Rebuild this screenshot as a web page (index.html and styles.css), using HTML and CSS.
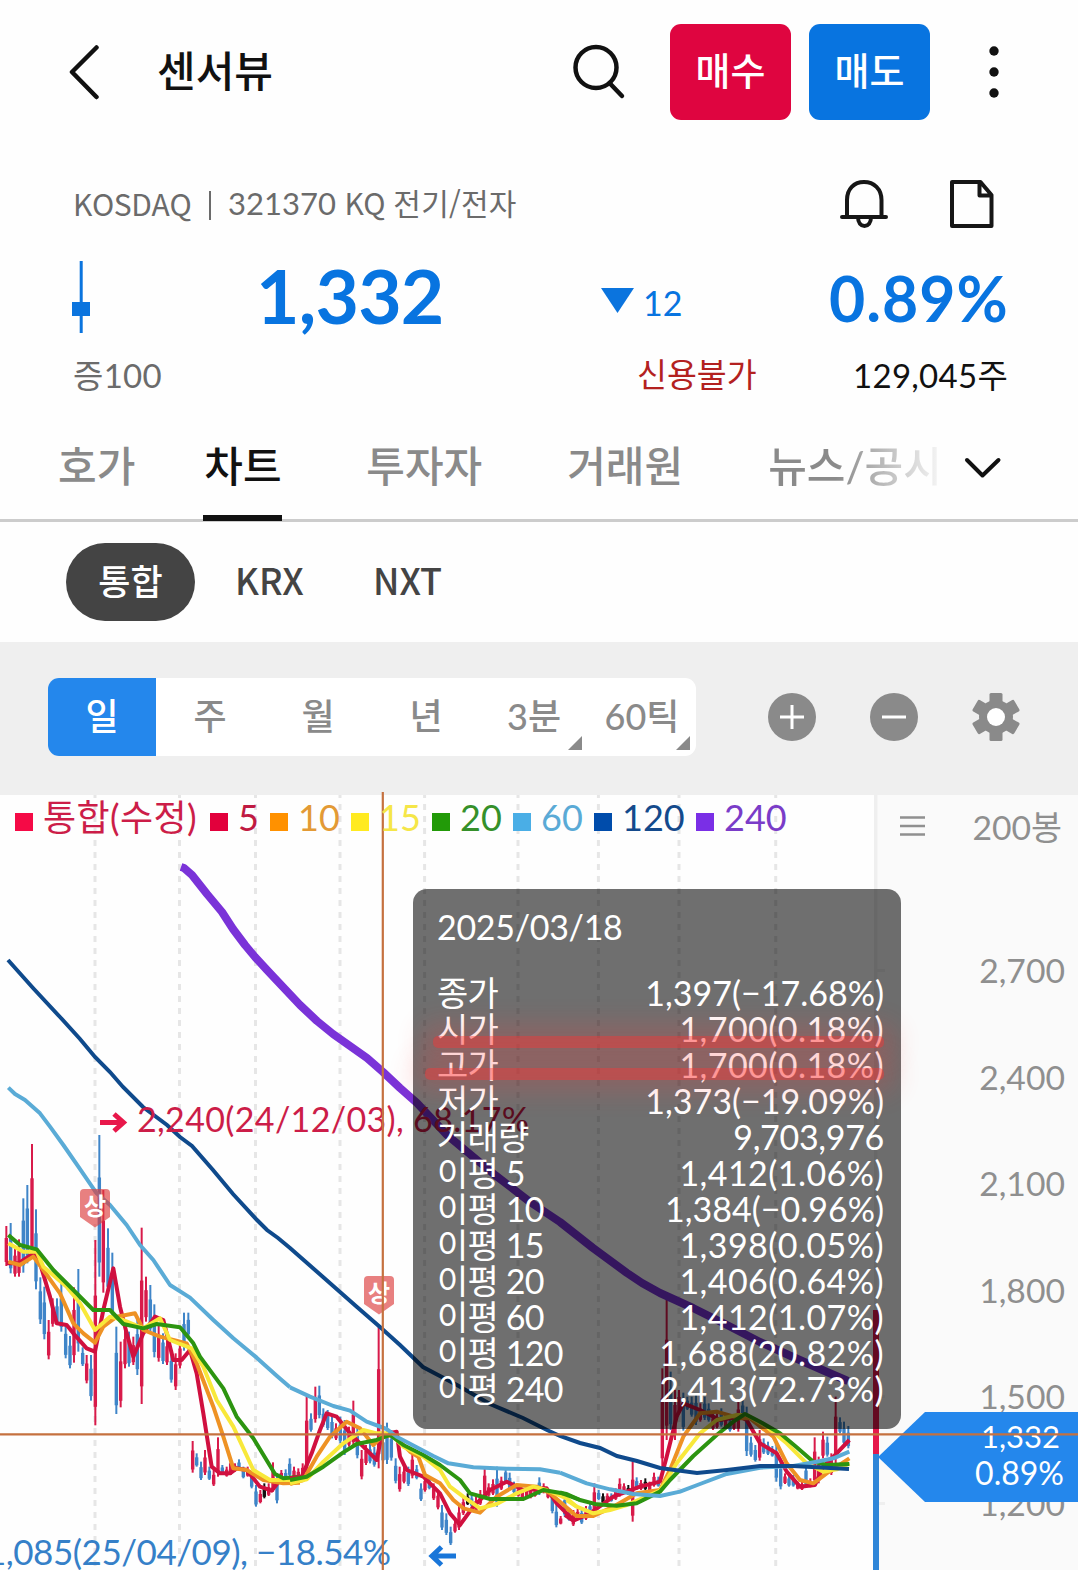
FILE: index.html
```html
<!DOCTYPE html>
<html lang="ko">
<head>
<meta charset="utf-8">
<title>센서뷰</title>
<link rel="stylesheet" href="styles.css">
</head>
<body>
<header class="topbar">
  <svg class="icon-back" width="34" height="56" viewBox="0 0 34 56"><path d="M29.500 3.500 5 28l24.500 25"/></svg>
  <h1 class="title">센서뷰</h1>
  <svg class="icon-search" width="56" height="56" viewBox="0 0 56 56"><circle cx="25" cy="23.500" r="20.500"/><path d="M38.500 39 51 52"/></svg>
  <button class="trade buy">매수</button>
  <button class="trade sell">매도</button>
  <svg class="icon-more" width="12" height="56" viewBox="0 0 12 56"><circle cx="6" cy="7" r="4.700"/><circle cx="6" cy="28" r="4.700"/><circle cx="6" cy="49" r="4.700"/></svg>
</header>

<section class="meta">
  <span class="market">KOSDAQ</span><i class="sep"></i><span class="code"><span class="num">321370</span> <span class="kq">KQ</span> 전기/전자</span>
  <svg class="icon-bell" width="50" height="50" viewBox="0 0 50 50"><path d="M3 38H47M8 38V21C8 10 15 3 25 3S42.500 10 42.500 21V38M19 38c0 6 3 9 6.500 9s6.500-3 6.500-9"/></svg>
  <svg class="icon-doc" width="46" height="50" viewBox="0 0 46 50"><path d="M3 3H31.500L42.500 16V47H3ZM30.500 3V16.500H42.500"/></svg>
</section>

<section class="quote">
  <svg class="mini-candle" width="18" height="72" viewBox="0 0 18 72"><path d="M7.700 0h3V72h-3ZM0 41h18v14H0Z"/></svg>
  <strong class="price">1,332</strong>
  <svg class="down" width="33" height="25" viewBox="0 0 33 25"><path d="M0 0H33L16.500 25Z"/></svg>
  <span class="diff">12</span>
  <strong class="rate">0.89%</strong>
</section>

<section class="sub">
  <span class="margin">증100</span>
  <span class="credit">신용불가</span>
  <span class="volume">129,045주</span>
</section>

<nav class="tabs">
  <a class="tab">호가</a>
  <a class="tab active">차트</a>
  <a class="tab">투자자</a>
  <a class="tab">거래원</a>
  <a class="tab fade">뉴스/공시</a>
  <svg class="icon-down" width="38" height="22" viewBox="0 0 38 22"><path d="M3 3 18.500 18.500 34.500 3"/></svg>
</nav>

<nav class="exchanges">
  <a class="pill on">통합</a><a class="pill krx">KRX</a><a class="pill nxt">NXT</a>
</nav>

<section class="toolbar">
  <div class="periods">
    <a class="period on">일</a><a class="period">주</a><a class="period">월</a><a class="period">년</a><a class="period more">3분</a><a class="period more">60틱</a>
  </div>
  <svg class="tool plus" width="48" height="48" viewBox="0 0 48 48"><circle cx="24" cy="24" r="24"/><path d="M12 24H36M24 12V36"/></svg>
  <svg class="tool minus" width="48" height="48" viewBox="0 0 48 48"><circle cx="24" cy="24" r="24"/><path d="M12 24H36"/></svg>
  <svg class="tool gear" width="48" height="48" viewBox="-24 -24 48 48">
    <g><circle r="17"/>
    <rect x="-6.500" y="-24" width="13" height="48" rx="1.500"/>
    <rect x="-6.500" y="-24" width="13" height="48" rx="1.500" transform="rotate(60)"/>
    <rect x="-6.500" y="-24" width="13" height="48" rx="1.500" transform="rotate(120)"/></g>
    <circle class="hole" r="9"/>
  </svg>
</section>

<main class="chart">
  <svg class="plot" width="1078" height="778" viewBox="0 792 1078 778">
    <rect class="axis-bg" x="877" y="795" width="201" height="775"/>
    <rect class="axis-line" x="874" y="795" width="3.500" height="775"/>
    <path class="axis-line" d="M877 969h8v3h-8zM877 1288h8v3h-8zM877 1395h8v3h-8zM877 1502h8v3h-8z"/>
    <path class="grid" d="M95 795V1570M179.500 795V1570M255.500 795V1570M340 795V1570M424.600 795V1570M518 795V1570M598.400 795V1570M679 795V1570M775.700 795V1570"/>
    <g id="candles"></g>
    <g class="ma" transform="translate(0 1120) scale(.33333)">
      <polyline class="m5" points="20,430 55,430 100,400 120,430 150,530 170,610 200,615 220,640 260,685 285,695 310,570 340,445 360,560 380,640 400,710 430,640 465,590 490,600 520,720 545,720 570,690 590,760 610,880 635,1040 660,1060 690,1060 710,1045 740,1050 780,1100 815,1112 840,1080 900,1070"/>
      <polyline class="m10" points="25,425 60,435 100,410 130,450 180,520 220,610 250,640 285,668 310,620 350,590 405,580 430,630 480,650 520,660 560,670 590,730 640,860 670,950 700,1045 740,1050 790,1080 850,1090 900,1088"/>
      <polyline class="m15" points="25,370 70,395 110,395 130,440 200,500 240,550 285,630 330,590 370,600 430,625 480,595 510,660 540,672 575,685 610,740 650,840 700,920 760,1050 810,1080 850,1080 900,1080"/>
      <polyline class="m20" points="25,345 60,375 110,388 160,450 220,510 280,570 330,570 370,612 430,625 470,612 540,622 580,670 600,710 670,805 710,890 760,955 825,1062 850,1075 900,1070"/>
      <polyline class="m60" points="25,-97 45,-78 75,-60 120,-20 150,20 190,75 235,140 290,220 330,255 380,315 420,375 460,420 510,495 570,533 640,600 700,655 770,713 830,767 870,802"/>
    </g>
    <g class="ma" transform="translate(290 1200) scale(.33333)">
      <polyline class="m5" points="0,835 35,830 65,760 90,690 110,640 140,650 180,700 220,740 260,780 275,705 320,695 330,770 350,810 400,830 450,880 480,940 510,975 550,920 600,870 650,845 700,870 770,865 800,910 850,960"/>
      <polyline class="m10" points="0,852 40,840 80,770 120,710 170,665 210,685 250,735 275,710 310,705 360,755 385,770 405,825 450,850 490,900 520,925 570,938 620,890 680,855 740,860 780,880 850,940"/>
      <polyline class="m15" points="0,850 50,838 100,785 160,730 220,690 260,700 300,700 340,740 400,770 450,810 480,860 520,890 570,925 620,912 680,880 730,860 770,870 830,895 860,920"/>
      <polyline class="m20" points="0,840 50,830 100,800 160,757 200,732 260,720 300,705 340,735 400,765 450,795 510,840 540,880 600,897 700,897 760,870 830,882 870,900"/>
      <polyline class="m60" points="0,562 60,590 130,618 180,632 230,665 290,687 320,710 380,742 430,768 475,790 550,802 650,806 750,808 810,818"/>
    </g>
    <g class="ma" transform="translate(560 1200) scale(.33333)">
      <polyline class="m5" points="15,945 40,962 90,940 160,890 240,860 300,845 320,770 350,650 370,610 420,630 480,660 540,650 560,660 600,730 650,760 680,815 720,860 765,855 790,800 830,760 868,720"/>
      <polyline class="m10" points="20,925 50,948 100,948 160,920 230,880 300,870 330,810 370,710 420,640 470,635 540,655 570,655 640,710 680,790 720,840 760,850 800,820 868,775"/>
      <polyline class="m15" points="20,900 50,920 100,940 150,930 200,915 300,872 350,790 420,700 470,660 530,645 560,645 620,680 680,730 740,790 790,815 830,808 868,790"/>
      <polyline class="m20" points="0,877 60,900 110,913 170,917 230,910 300,875 330,840 400,768 470,705 520,665 555,642 600,665 660,700 710,742 760,785 800,795 868,792"/>
      <polyline class="m60" points="0,818 80,850 150,868 220,882 300,888 360,875 420,852 500,822 600,803 700,798 770,785 820,775 868,755"/>
    </g>
    <polyline class="m120" points="8,960 33,988 60,1017 80,1039 95,1057 110,1072 123,1087 143,1107 167,1125 180,1137 192,1146 213,1170 233,1194 257,1220 267,1230 278,1238 290,1248 323,1277 357,1307 380,1327 400,1345 423,1367 457,1385 490,1404 523,1418 547,1430 560,1436 580,1443 600,1448 617,1456 637,1461 660,1468 697,1473 727,1470 760,1466 793,1466 849,1469"/>
    <polyline class="m240" points="181,867 184,868 192,875 207,894 222,912 233,929 245,945 255,957 267,970 283,987 300,1005 317,1021 333,1034 350,1046 367,1058 383,1072 400,1088 417,1103 447,1135 495,1175 530,1202 560,1222 593,1248 627,1273 642,1283 660,1293 693,1308 727,1325 760,1342 793,1357 827,1372 848,1381"/>
    <rect class="up" x="873" y="1310" width="6" height="144"/>
    <rect class="dn" x="873" y="1454" width="6" height="116"/>
    <g class="high">
      <path d="M100 1122.500H123M114 1114 123.500 1122.500 114 1131"/>
      <text x="137" y="1132" textLength="392">2,240(24/12/03), 68.17%</text>
    </g>
    <g class="low">
      <path d="M456 1556H433M441.500 1547 432 1556l9.500 9"/>
      <text x="-14" y="1565" textLength="405">1,085(25/04/09), −18.54%</text>
    </g>
    <g class="badge"><path d="M84 1189h22q4 0 4 4v24l-15 10.500L80 1217v-24q0-4 4-4z"/><text x="95" y="1215">상</text></g>
    <g class="badge"><path d="M368 1276h22q4 0 4 4v24l-15 10.500L364 1304v-24q0-4 4-4z"/><text x="379" y="1302">상</text></g>
    <g class="scale">
      <text x="1065" y="983">2,700</text><text x="1065" y="1089.500">2,400</text><text x="1065" y="1196">2,100</text>
      <text x="1065" y="1302.500">1,800</text><text x="1065" y="1408.500">1,500</text><text x="1065" y="1516">1,200</text>
      <text x="1062" y="840">200봉</text>
      <path d="M900 817.500H925M900 826H925M900 834.500H925"/>
    </g>
    <g class="tag">
      <path d="M878 1457 925 1412H1078V1502H925Z"/>
      <text x="1060" y="1448">1,332</text><text x="1064" y="1484.500">0.89%</text>
    </g>
    <path class="cross" d="M382.800 792V1570M0 1434.300H1078"/>
  </svg>

  <ul class="legend">
    <li class="c0"><b></b>통합(수정)</li><li class="c5"><b></b>5</li><li class="c10"><b></b>10</li><li class="c15"><b></b>15</li><li class="c20"><b></b>20</li><li class="c60"><b></b>60</li><li class="c120"><b></b>120</li><li class="c240"><b></b>240</li>
  </ul>

  <div class="tooltip">
    <p class="date">2025/03/18</p>
    <dl class="values">
      <dt>종가</dt><dd class="neg">1,397(−17.68%)</dd>
      <dt>시가</dt><dd>1,700(0.18%)</dd>
      <dt>고가</dt><dd>1,700(0.18%)</dd>
      <dt>저가</dt><dd class="neg">1,373(−19.09%)</dd>
      <dt>거래량</dt><dd class="vol">9,703,976</dd>
      <dt>이평 5</dt><dd>1,412(1.06%)</dd>
      <dt>이평 10</dt><dd class="neg">1,384(−0.96%)</dd>
      <dt>이평 15</dt><dd>1,398(0.05%)</dd>
      <dt>이평 20</dt><dd>1,406(0.64%)</dd>
      <dt>이평 60</dt><dd>1,412(1.07%)</dd>
      <dt>이평 120</dt><dd>1,688(20.82%)</dd>
      <dt>이평 240</dt><dd>2,413(72.73%)</dd>
    </dl>
    <i class="marker first"></i><i class="marker second"></i>
  </div>
</main>
<script src="chart.js"></script>
</body>
</html>
```
FILE: styles.css
```css
* { box-sizing: border-box; margin: 0; padding: 0; }
body {
  width: 1078px; height: 1570px; overflow: hidden; background: #fefefe; color: #111;
  font-family: Lato, "Noto Sans CJK KR", sans-serif; line-height: 1;
  font-kerning: none;
}
svg { display: block; flex: none; fill: none; }
h1, strong, span, a { white-space: nowrap; }

.topbar { display: flex; align-items: center; height: 144px; padding-left: 67px; }
.icon-back, .icon-search { stroke: #111; stroke-width: 4.500; stroke-linecap: round; stroke-linejoin: round; }
.title { width: 415px; margin-left: 56px; padding-bottom: 3px; font-size: 42px; font-weight: 500; }
.icon-search { margin-left: -1px; }
.trade { width: 121px; height: 96px; padding-bottom: 3px; border: 0; border-radius: 11px; color: #fff; font: 500 38px/93px Lato, "Noto Sans CJK KR", sans-serif; }
.buy { margin-left: 43px; background: #df0540; }
.sell { margin-left: 18px; background: #0874e0; }
.icon-more { margin-left: 58px; fill: #111; }

.meta { display: flex; align-items: center; height: 108px; margin-top: 6px; padding-left: 73px; margin-bottom: -6px; color: #6b6b6b; font-family: "Noto Sans CJK KR", sans-serif; font-size: 30px; }
.market { width: 118px; padding-bottom: 2px; letter-spacing: -.4px; }
.sep { width: 2px; height: 29px; margin: 2px 17px 0 18px; background: #6b6b6b; }
.code { width: 611px; padding-bottom: 2px; letter-spacing: .2px; }
.num { font-family: Lato, sans-serif; font-size: 31px; letter-spacing: 0; }
.kq { letter-spacing: -.7px; }
.meta svg { stroke: #161616; stroke-width: 4; stroke-linejoin: round; stroke-linecap: round; }
.icon-doc { margin-left: 60px; }

.quote { display: flex; align-items: center; height: 88px; padding-left: 72px; color: #0874e0; }
.mini-candle, .down { fill: #0b74de; }
.mini-candle { margin-top: 2px; }
.price { width: 344px; margin-left: 166px; padding-bottom: 2px; font-size: 75px; font-weight: 700; letter-spacing: -.8px; }
.down { margin: 9px 0 0 1px; }
.diff { width: 186px; margin: 14px 0 0 9px; font-size: 34px; }
.rate { margin-top: 4px; font-size: 62.500px; font-weight: 700; letter-spacing: 1px; }

.sub { display: flex; align-items: center; height: 70px; padding-left: 73px; font-size: 33px; color: #111; }
.margin { width: 564px; color: #6b6b6b; letter-spacing: .3px; }
.credit { width: 216px; padding-top: 1px; color: #b3211f; font-size: 32.500px; }
.volume { letter-spacing: .3px; }

.tabs { display: flex; align-items: center; height: 112px; padding-left: 58px; border-bottom: 3px solid #ccc; color: #8a8a8a; font-size: 42px; font-weight: 500; }
.tab { height: 112px; line-height: 115px; }
.tab.active { width: 79px; margin: 0 84px 0 68px; padding-left: 1px; color: #111; border-bottom: 6px solid #111; }
.tab + .tab:not(.active) { margin-right: 85px; }
.tab.fade { width: 178px; background: linear-gradient(90deg, #8a8a8a 38%, #f4f4f4 96%); background-clip: text; color: transparent; }
.tabs .tab.fade { margin-right: 18px; }
.icon-down { margin-top: 6px; stroke: #111; stroke-width: 4; stroke-linecap: round; stroke-linejoin: round; }

.exchanges { display: flex; align-items: center; height: 120px; padding-left: 66px; color: #444; font: 500 35px/78px "Noto Sans CJK KR", sans-serif; }
.pill.on { width: 129px; height: 78px; border-radius: 39px; text-align: center; background: #444; color: #fff; line-height: 73px; }
.krx, .nxt { font-size: 36px; padding-bottom: 6px; }
.krx { margin-left: 40px; width: 138px; }

.toolbar { display: flex; align-items: center; height: 153px; padding: 0 0 3px 48px; background: #efefef; }
.periods { display: grid; grid-template-columns: repeat(6, 108px); height: 78px; border-radius: 11px; overflow: hidden; background: #fff; }
.period { position: relative; text-align: center; font-size: 36px; font-weight: 500; line-height: 76px; color: #8a8a8a; }
.period.on { background: #2487ec; color: #fff; }
.more::after { content: ""; position: absolute; right: 6px; bottom: 6px; border-left: 14px solid transparent; border-bottom: 14px solid #8a8a8a; }
.tool { fill: #8a8a8a; }
.tool path { stroke: #fff; stroke-width: 3; }
.plus { margin-left: 72px; }
.minus { margin-left: 54px; }
.gear { margin-left: 54px; }
.hole { fill: #fff; }

.chart { position: relative; height: 775px; }
.plot { margin-top: -3px; position: absolute; top: 0; left: 0; }
.axis-bg { fill: #fafafa; }
.axis-line { fill: #efefef; }
.grid { stroke: #e6e6e6; stroke-width: 3; stroke-dasharray: 6 6; stroke-dashoffset: 3; }
.ma polyline { stroke-width: 12; stroke-linejoin: round; }
.ma .m5 { stroke: #d0103f; } .ma .m10 { stroke: #ee9224; } .ma .m15 { stroke: #f8e83a; }
.ma .m20 { stroke: #2c9410; } .ma .m60 { stroke: #5aabd6; }
.m120 { stroke: #0f4a8c; stroke-width: 4; }
.m240 { stroke: #7a33d8; stroke-width: 8; stroke-linejoin: round; }
.up { fill: #e6194b; } .dn { fill: #2f86d8; }
.plot text { font-size: 34px; }
.high text { fill: #cc1d48; } .high path { stroke: #e8174a; stroke-width: 5; }
.plot .low text { fill: #3580c8; font-size: 35px; } .low path { stroke: #1976d9; stroke-width: 5; }
.badge path { fill: #db3c3c; fill-opacity: .65; }
.plot .badge text { fill: #fff; font-size: 24px; font-weight: 700; text-anchor: middle; }
.plot .scale text { fill: #8f8f8f; text-anchor: end; font-size: 33.700px; }
.scale path { stroke: #909090; stroke-width: 2.500; }
.tag path { fill: #2487ec; }
.plot .tag text { fill: #fff; text-anchor: end; font-size: 32px; }
.plot .tag text:nth-of-type(1) { font-size: 31px; }
.cross { stroke: #c5713f; stroke-width: 2.200; }

.legend { position: absolute; top: 0; left: 15px; display: flex; list-style: none; font-size: 36px; line-height: 44px; }
.legend li { display: flex; white-space: nowrap; }
.legend b { width: 18px; height: 18px; margin: 18px 10px 0 0; background: currentColor; }
.c0 { width: 195px; color: #cc1d48; letter-spacing: .4px; } .c5 { width: 60px; color: #c01a42; }
.c10 { width: 81px; color: #e39a35; } .c15 { width: 81px; color: #f5e648; }
.c20 { width: 81px; color: #35902a; } .c60 { width: 81px; color: #5aaad6; }
.c120 { width: 102px; color: #144a8c; } .c240 { color: #7a3cc8; }
.c0 b { background: #f50a46; } .c5 b { background: #e2003c; } .c10 b { background: #ff9100; } .c15 b { background: #ffea20; }
.c20 b { background: #229a08; } .c60 b { background: #4aaee6; } .c120 b { background: #004cab; } .c240 b { background: #7a2fe6; }

.tooltip { position: absolute; left: 413px; top: 94px; width: 488px; height: 540px; padding: 20px 17px 0 24px; border-radius: 14px; background: rgba(0, 0, 0, .565); color: #fff; font-size: 34px; line-height: 36px; }
.date { margin-bottom: 30px; letter-spacing: -.3px; }
.values { display: grid; grid-template-columns: 1fr auto; }
.values dt, .values dd { height: 36px; white-space: nowrap; }
.values dt { letter-spacing: -.8px; }
.values dd { text-align: right; letter-spacing: .45px; }
.values .neg { letter-spacing: 0; }
.values .vol { letter-spacing: -.3px; }
.marker { position: absolute; height: 12px; border-radius: 5px; background: rgba(255, 52, 52, .5); box-shadow: 0 0 26px 12px rgba(255, 60, 60, .2); }
.first { left: 20px; right: 17px; top: 147px; }
.second { left: 12px; right: 17px; top: 179px; }
```
FILE: chart.js
```js
// Each entry: x, high, low, colour (r up, b down, k flat), in thirds of a pixel from the block origin.
const blocks = [
  [0, 1120, `19,318,438,r 32,309,460,b 45,380,470,r 57,358,470,r 70,235,458,b 82,195,430,b 96,72,415,r 108,268,508,b
  121,472,612,b 133,500,658,b 146,600,718,r 158,535,620,r 171,535,615,b 184,492,635,b 197,610,715,b 210,648,745,b
  222,502,728,r 235,447,695,b 248,682,738,b 260,705,790,r 273,705,842,b 286,360,916,r 298,45,470,b 310,210,518,r
  324,325,520,b 337,398,600,b 349,620,882,b 362,665,862,r 375,620,745,r 387,635,740,b 400,650,735,r 412,590,765,b
  425,323,852,r 438,470,605,r 451,495,640,b 463,553,712,b 476,610,725,r 489,640,732,b 501,655,735,r 514,695,788,b
  527,700,810,r 540,660,745,r 552,578,692,b 565,578,650,b 578,963,1058,r 590,1000,1040,b 603,1025,1080,b 615,990,1065,r
  628,1040,1080,b 641,1050,1098,r 654,952,1070,r 667,1035,1060,b 680,1040,1070,r 692,1015,1065,r 705,1030,1055,r
  717,1018,1050,b 730,1040,1075,b 743,1040,1070,r 755,1055,1105,b 768,1095,1160,b 781,1110,1150,r 793,1090,1135,k
  806,1090,1128,r 819,1027,1115,r 831,1060,1150,b 844,1050,1080,r 857,1048,1085,b 869,1015,1070,b`],
  [290, 1200, `12,800,840,r 25,805,840,r 38,790,835,r 50,590,830,r 63,640,695,b 76,560,668,r 88,557,655,b 100,625,680,b
  113,630,690,b 126,645,715,b 138,670,720,r 151,650,730,b 164,660,765,b 177,680,740,r 190,602,740,r 202,680,775,b
  215,750,838,r 228,735,795,r 240,730,790,b 253,740,800,b 266,380,805,r 279,700,790,b 291,668,792,b 304,690,782,b
  317,775,850,b 329,800,875,r 342,800,850,r 355,800,858,b 367,755,835,r 380,795,838,b 393,850,903,b 405,830,875,r
  418,830,868,b 431,850,900,r 444,870,928,r 456,915,990,b 469,940,1005,b 482,980,1035,b 495,960,998,r 507,915,990,r
  520,890,945,r 533,880,915,k 545,885,920,b 558,890,935,r 571,870,915,r 584,800,890,r 596,850,890,r 609,838,885,r
  621,800,920,b 634,830,870,r 647,803,850,b 659,818,870,b 672,845,880,b 685,860,890,r 697,865,895,r 710,865,895,r
  722,860,895,r 735,865,890,r 748,832,885,b 761,850,880,r 774,865,895,r 787,870,940,b 799,915,982,b 812,948,973,r
  824,880,950,b 837,930,962,b 850,930,978,r 863,925,960,r 875,925,972,b 888,918,960,r`],
  [560, 1200, `90,910,940,b 103,850,940,r 116,870,900,b 129,880,910,k 142,880,905,r 154,880,905,b 167,865,900,r
  179,835,890,r 192,850,880,r 205,855,885,k 218,785,965,r 230,832,870,b 243,840,870,r 256,835,870,k 269,845,875,r
  282,818,860,r 295,830,860,b 307,505,805,r 320,290,720,r 332,515,690,b 345,570,720,r 357,570,640,r 370,578,692,b
  382,590,630,b 395,590,650,b 408,580,675,b 421,610,665,r 434,590,660,b 446,610,665,b 459,640,690,r 471,640,685,r
  484,625,680,b 497,640,685,r 510,650,695,b 522,650,690,r 535,600,695,r 548,598,660,b 560,620,768,b 573,710,770,b
  586,735,785,b 599,690,782,r 611,715,762,b 624,725,765,b 637,738,770,b 649,725,845,b 662,780,868,b 675,820,852,r
  687,825,860,b 700,825,860,b 713,845,868,r 726,845,870,r 738,790,862,b 751,835,862,r 764,712,855,r 776,770,850,r
  789,695,775,r 802,710,770,b 814,760,825,r 827,590,790,r 840,652,700,b 852,665,735,b 865,678,745,b`]
];
const colours = { r: '#d81a4a', b: '#3f85c8', k: '#111' };
const layer = document.getElementById('candles');
for (const [ox, oy, rows] of blocks) {
  for (const row of rows.trim().split(/\s+/)) {
    const [x, hi, lo, c] = row.split(',');
    const cx = ox + x / 3, top = oy + hi / 3, h = (lo - hi) / 3;
    for (const [w, a, b] of [[2, 0, 1], [3.4, .3, .9]]) {
      const r = document.createElementNS('http://www.w3.org/2000/svg', 'rect');
      r.setAttribute('x', cx - w / 2);
      r.setAttribute('y', top + h * a);
      r.setAttribute('width', w);
      r.setAttribute('height', h * (b - a));
      r.setAttribute('fill', colours[c]);
      layer.append(r);
    }
  }
}
```
